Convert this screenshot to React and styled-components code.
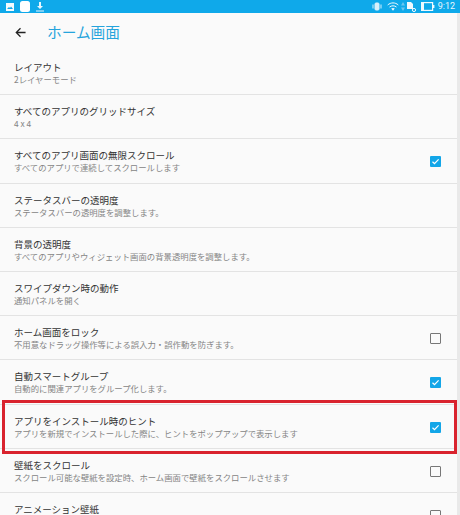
import React from "react";
import styled, { createGlobalStyle } from "styled-components";

const Global = createGlobalStyle`
  html, body { margin: 0; padding: 0; background: #fafafa; }
  body { font-family: "Noto Sans CJK JP", "Roboto", sans-serif; }
`;
const Page = styled.div`
  position: relative; width: 460px; height: 515px; overflow: hidden; background: #fafafa;
`;
const StatusBar = styled.div`
  height: 13px; background: #0fa9ea; display: flex; align-items: center; padding: 0 5px 0 6px; color: #fff;
`;
const StatusLeft = styled.div`display: flex; align-items: center; gap: 6px; flex: 1;`;
const StatusRight = styled.div`display: flex; align-items: center; gap: 2px;`;
const StatusIcon = styled.svg`margin-left: ${p => p.$gap || 0}px; flex-shrink: 0;`;
const Time = styled.span`font-family: "Roboto", sans-serif; font-size: 9px; color: #e8f6fd; margin-left: 1px; line-height: 13px;`;
const WhiteApp = styled.span`width: 10px; height: 11px; border-radius: 2.5px; background: #fff;`;
const Header = styled.header`
  height: 38px; display: flex; align-items: center; padding-left: 15px; box-sizing: border-box;
`;
const Back = styled.svg`width: 11px; height: 11px; margin-right: 22px;`;
const Title = styled.h1`
  margin: 0 0 0 -1px; font-size: 14.7px; font-weight: 400; color: #25a4dc; line-height: 38px;
`;
const List = styled.div`display: flex; flex-direction: column;`;
const RowBox = styled.div`
  box-sizing: border-box; height: 44.2px; padding: 10px 19px 0 14px; display: flex; align-items: flex-start;
  border-bottom: 1px solid #e3e3e3; flex-shrink: 0;
`;
const Texts = styled.div`flex: 1; min-width: 0;`;
const RowTitle = styled.div`font-size: 9.5px; line-height: 13px; color: #333; white-space: nowrap;`;
const RowSub = styled.div`font-size: 8.37px; line-height: 11px; color: #858585; white-space: nowrap;`;
const Box = styled.div`
  box-sizing: border-box; width: 11px; height: 11px; margin-top: 7px; border-radius: 1px;
  border: ${p => (p.$on ? "none" : "1.5px solid #777")};
  background: ${p => (p.$on ? "#13a6e8" : "transparent")};
  display: flex; align-items: center; justify-content: center;
`;
const Highlight = styled.div`
  position: absolute; left: 2px; top: 400px; width: 455px; height: 54px; box-sizing: border-box;
  border: 3px solid #d9232e; pointer-events: none;
`;
const Edge = styled.div`
  position: absolute; right: 0; top: 13px; bottom: 0; width: 3px; background: #e9e9e9;
`;

const rows = [
  ["レイアウト", "2レイヤーモード"],
  ["すべてのアプリのグリッドサイズ", "4 x 4"],
  ["すべてのアプリ画面の無限スクロール", "すべてのアプリで連続してスクロールします", true],
  ["ステータスバーの透明度", "ステータスバーの透明度を調整します。"],
  ["背景の透明度", "すべてのアプリやウィジェット画面の背景透明度を調整します。"],
  ["スワイプダウン時の動作", "通知パネルを開く"],
  ["ホーム画面をロック", "不用意なドラッグ操作等による誤入力・誤作動を防ぎます。", false],
  ["自動スマートグループ", "自動的に関連アプリをグループ化します。", true],
  ["アプリをインストール時のヒント", "アプリを新規でインストールした際に、ヒントをポップアップで表示します", true],
  ["壁紙をスクロール", "スクロール可能な壁紙を設定時、ホーム画面で壁紙をスクロールさせます", false],
  ["アニメーション壁紙", "", false],
];

const Row = ({ title, sub, check }) => (
  <RowBox>
    <Texts>
      <RowTitle>{title}</RowTitle>
      {sub && <RowSub>{sub}</RowSub>}
    </Texts>
    {check !== undefined && (
      <Box $on={check}>
        {check && (
          <svg width="9" height="9" viewBox="0 0 9 9" fill="none" stroke="#fff" strokeWidth="1.2">
            <path d="M1.5 4.8 3.5 6.7 7.6 2.3" />
          </svg>
        )}
      </Box>
    )}
  </RowBox>
);

export default function App() {
  return (
    <Page>
      <Global />
      <StatusBar>
        <StatusLeft>
          <svg width="8" height="8" viewBox="0 0 8 8" fill="#fff"><path d="M0 0h8v8H0z" opacity=".95" /><path d="M1 6l2-2 1 1 1-1.5L7 6z" fill="#0fa9ea" /></svg>
          <WhiteApp />
          <svg width="8" height="10" viewBox="0 0 8 10" fill="#e8f6fd"><path d="M3 0h2v4h2L4 7 1 4h2zM0 8.5h8v1H0z" /></svg>
        </StatusLeft>
        <StatusRight>
          <StatusIcon width="10" height="9" viewBox="0 0 10 9" fill="none" stroke="#d8f0fb"><rect x="3" y="1" width="4" height="7" rx="1" fill="#d8f0fb" /><path d="M1 2.5v4M9 2.5v4" /></StatusIcon>
          <StatusIcon $gap="3" width="12" height="9" viewBox="0 0 12 9" fill="none" stroke="#eef9fe"><path d="M.7 3C3.7.2 8.3.2 11.3 3M2.5 5C4.5 3.4 7.5 3.4 9.5 5" /><path d="M4.2 6.500 6 8.700 7.800 6.500C6.700 5.800 5.300 5.800 4.200 6.500z" fill="#eef9fe" stroke="none" /></StatusIcon>
          <StatusIcon width="4" height="9" viewBox="0 0 4 9" fill="#6cc6ef"><path d="M2 0l2 3.5H0zM2 9L0 5.5h4z" /></StatusIcon>
          <StatusIcon width="9" height="10" viewBox="0 0 9 10" fill="#eef9fe"><path d="M0 0h4l2 2v5H0z" /><circle cx="7" cy="8" r="1.6" fill="none" stroke="#eef9fe" /></StatusIcon>
          <StatusIcon $gap="3" width="14" height="9" viewBox="0 0 14 9"><rect x=".6" y=".6" width="11" height="7.800" fill="none" stroke="#eef9fe" strokeWidth="1.200" /><rect x="1" y="1" width="2" height="7" fill="#eef9fe" /><rect x="12" y="3" width="1.400" height="3" fill="#eef9fe" /></StatusIcon>
          <Time>9:12</Time>
        </StatusRight>
      </StatusBar>
      <Header>
        <Back viewBox="0 0 13 13" fill="none" stroke="#222" strokeWidth="1.5">
          <path d="M12.5 6.5H1.5M6.5 1.5l-5 5 5 5" />
        </Back>
        <Title>ホーム画面</Title>
      </Header>
      <List>
        {rows.map(([t, s, c]) => <Row key={t} title={t} sub={s} check={c} />)}
      </List>
      <Edge />
      <Highlight />
    </Page>
  );
}
